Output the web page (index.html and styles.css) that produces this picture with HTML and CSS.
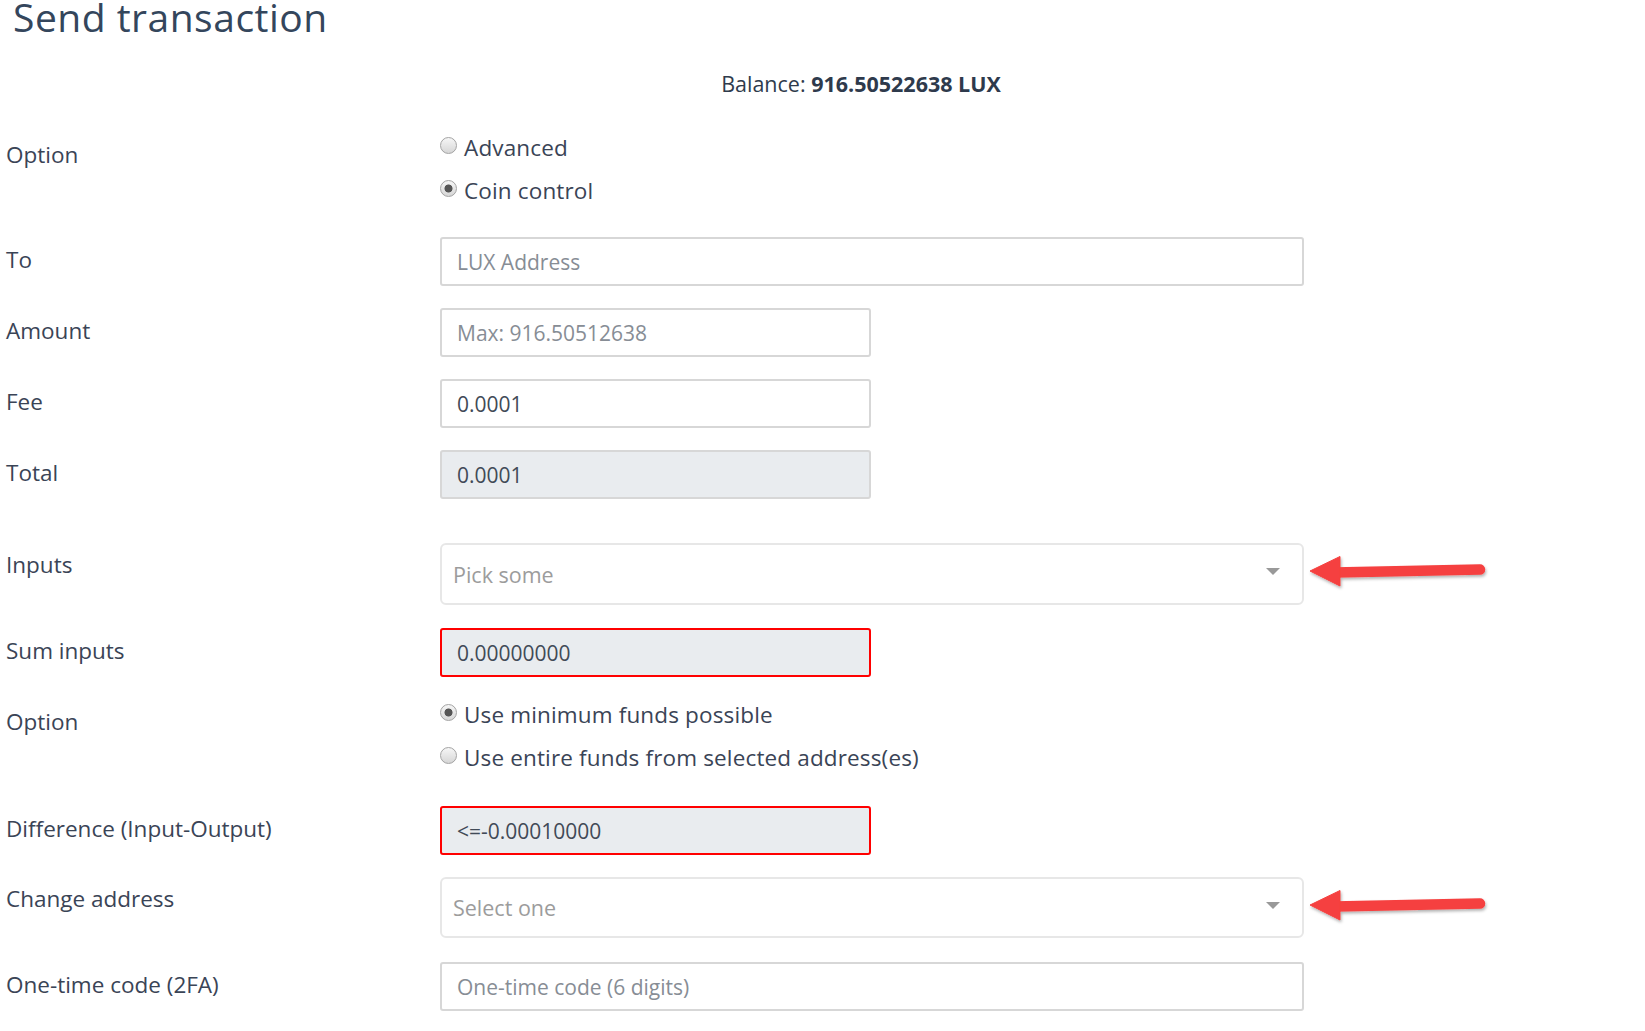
FILE: index.html
```html
<!DOCTYPE html>
<html lang="en">
<head>
<meta charset="utf-8">
<title>Send transaction</title>
<link rel="stylesheet" href="styles.css">
</head>
<body>
<div class="page">
  <h1 class="title">Send transaction</h1>
  <div class="balance-row">
    <div class="balance">Balance: <b>916.50522638 LUX</b></div>
  </div>
  <form class="form">
    <div class="row row-radios1">
      <div class="label">Option</div>
      <div class="field radios">
        <label class="radio"><input type="radio" name="opt1"><span>Advanced</span></label>
        <label class="radio"><input type="radio" name="opt1" checked><span>Coin control</span></label>
      </div>
    </div>
    <div class="row row-input">
      <div class="label">To</div>
      <div class="field wide"><input class="input" type="text" placeholder="LUX Address"></div>
    </div>
    <div class="row row-input">
      <div class="label">Amount</div>
      <div class="field narrow"><input class="input" type="text" placeholder="Max: 916.50512638"></div>
    </div>
    <div class="row row-input">
      <div class="label">Fee</div>
      <div class="field narrow"><input class="input" type="text" value="0.0001"></div>
    </div>
    <div class="row row-input row-total">
      <div class="label">Total</div>
      <div class="field narrow"><input class="input readonly" type="text" value="0.0001" readonly></div>
    </div>
    <div class="row row-select">
      <div class="label label-select">Inputs</div>
      <div class="field wide select-wrap">
        <div class="select"><span class="select-ph">Pick some</span><span class="caret"></span></div>
        <svg class="arrow" width="190" height="40" viewBox="0 0 190 40">
          <defs>
            <filter id="sh1" x="-10%" y="-30%" width="120%" height="160%">
              <feDropShadow dx="1" dy="2" stdDeviation="1.4" flood-color="#000" flood-opacity="0.3"/>
            </filter>
          </defs>
          <g filter="url(#sh1)" fill="#f5403f" stroke="#f5403f">
            <path d="M28 21.5 L173 18.5" stroke-width="10.5" stroke-linecap="round" fill="none"/>
            <polygon points="3,20 33,5.5 33,35" stroke-width="1" stroke-linejoin="round"/>
          </g>
        </svg>
      </div>
    </div>
    <div class="row row-input row-sum">
      <div class="label">Sum inputs</div>
      <div class="field narrow"><input class="input readonly error" type="text" value="0.00000000" readonly></div>
    </div>
    <div class="row row-radios2">
      <div class="label">Option</div>
      <div class="field radios">
        <label class="radio"><input type="radio" name="opt2" checked><span>Use minimum funds possible</span></label>
        <label class="radio"><input type="radio" name="opt2"><span>Use entire funds from selected address(es)</span></label>
      </div>
    </div>
    <div class="row row-input">
      <div class="label">Difference (Input-Output)</div>
      <div class="field narrow"><input class="input readonly error" type="text" value="&lt;=-0.00010000" readonly></div>
    </div>
    <div class="row row-select row-select2">
      <div class="label label-select">Change address</div>
      <div class="field wide select-wrap">
        <div class="select"><span class="select-ph">Select one</span><span class="caret"></span></div>
        <svg class="arrow" width="190" height="40" viewBox="0 0 190 40">
          <defs>
            <filter id="sh2" x="-10%" y="-30%" width="120%" height="160%">
              <feDropShadow dx="1" dy="2" stdDeviation="1.4" flood-color="#000" flood-opacity="0.3"/>
            </filter>
          </defs>
          <g filter="url(#sh2)" fill="#f5403f" stroke="#f5403f">
            <path d="M28 21.5 L173 18.5" stroke-width="10.5" stroke-linecap="round" fill="none"/>
            <polygon points="3,20 33,5.5 33,35" stroke-width="1" stroke-linejoin="round"/>
          </g>
        </svg>
      </div>
    </div>
    <div class="row row-input row-last">
      <div class="label">One-time code (2FA)</div>
      <div class="field wide"><input class="input" type="text" placeholder="One-time code (6 digits)"></div>
    </div>
  </form>
</div>
</body>
</html>
```

FILE: styles.css
```css
html, body {
  margin: 0;
  padding: 0;
  background: #ffffff;
}

body {
  font-family: "Open Sans", "Noto Sans", "DejaVu Sans", sans-serif;
  color: #3a4456;
  overflow: hidden;
}

.page {
  width: 1645px;
  height: 1031px;
  overflow: hidden;
}

.title {
  margin: 0;
  padding-left: 13px;
  font-size: 39px;
  font-weight: 400;
  line-height: 34px;
  color: #34465c;
  letter-spacing: 0.5px;
}

.balance-row {
  margin-top: 38px;
  margin-left: 440px;
  width: 864px;
}

.balance {
  text-align: center;
  padding-right: 22px;
  font-size: 21.5px;
  line-height: 24px;
  color: #2f3b4c;
}

.balance b {
  font-weight: 700;
  color: #2e3a4c;
}

.form {
  margin-top: 36px;
}

.row {
  display: flex;
  align-items: flex-start;
}

.label {
  flex: 0 0 434px;
  padding-left: 6px;
  padding-top: 8px;
  font-size: 22.5px;
  line-height: 30px;
  color: #3a4456;
}

.label-select {
  padding-top: 7px;
}

.field {
  position: relative;
}

.wide {
  width: 864px;
}

.narrow {
  width: 431px;
}

.radios {
  display: flex;
  flex-direction: column;
  gap: 13px;
}

.radio {
  display: flex;
  align-items: center;
  height: 30px;
  font-size: 22.5px;
  color: #3a4456;
  letter-spacing: 0.15px;
}

.radio input {
  appearance: none;
  -webkit-appearance: none;
  width: 17px;
  height: 17px;
  margin: 0 7px 0 0;
  border-radius: 50%;
  border: 1px solid #a3a3a3;
  background: linear-gradient(#f6f6f6, #d6d6d6);
  box-sizing: border-box;
  flex: 0 0 auto;
  position: relative;
  top: -2px;
}

.radio input:checked {
  background: radial-gradient(circle, #555555 0 3.6px, rgba(85, 85, 85, 0) 4.4px), linear-gradient(#f6f6f6, #d6d6d6);
}

.row-radios1 {
  margin-bottom: 32px;
}

.row-input {
  margin-bottom: 22px;
}

.row-total {
  margin-bottom: 44px;
}

.row-select {
  margin-bottom: 23px;
}

.row-select2 {
  margin-bottom: 24px;
}

.row-radios2 {
  margin-bottom: 34px;
}

.row-last {
  margin-bottom: 0;
}

.input {
  display: block;
  width: 100%;
  height: 49px;
  box-sizing: border-box;
  margin: 0;
  padding: 0 15px;
  border: 2px solid #d7d7d7;
  border-radius: 3px;
  background: #ffffff;
  font-family: inherit;
  font-size: 21px;
  color: #414a57;
  outline: none;
}

.input::placeholder {
  color: #878d95;
  opacity: 1;
}

.input.readonly {
  background: #e9ecef;
}

.input.error {
  border-color: #ff0000;
}

.select {
  height: 62px;
  box-sizing: border-box;
  border: 2px solid #e7e7e7;
  border-radius: 6px;
  display: flex;
  align-items: center;
  justify-content: space-between;
  padding: 0 22px 0 11px;
  background: #ffffff;
}

.row-select2 .select {
  height: 61px;
}

.select-ph {
  font-size: 21.5px;
  color: #9c9c9c;
}

.caret {
  width: 0;
  height: 0;
  border-left: 7px solid transparent;
  border-right: 7px solid transparent;
  border-top: 7px solid #999999;
  margin-top: -5px;
}

.arrow {
  position: absolute;
  left: 100%;
  top: 8px;
  margin-left: 3px;
  overflow: visible;
}
```
